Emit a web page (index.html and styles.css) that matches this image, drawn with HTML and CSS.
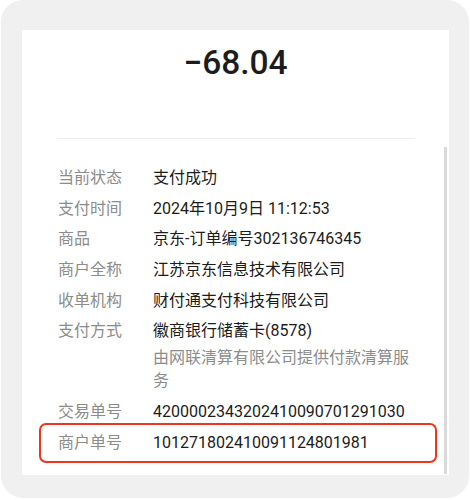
FILE: index.html
```html
<!DOCTYPE html>
<html lang="zh-CN">
<head>
<meta charset="utf-8">
<title>账单详情</title>
<link rel="stylesheet" href="styles.css">
</head>
<body>
<div class="frame">
  <div class="panel">
    <div class="amount">−68.04</div>
    <div class="divider"></div>
    <div class="details">
      <div class="row"><div class="label">当前状态</div><div class="value">支付成功</div></div>
      <div class="row"><div class="label">支付时间</div><div class="value">2024年10月9日 11:12:53</div></div>
      <div class="row"><div class="label">商品</div><div class="value">京东-订单编号302136746345</div></div>
      <div class="row"><div class="label">商户全称</div><div class="value">江苏京东信息技术有限公司</div></div>
      <div class="row"><div class="label">收单机构</div><div class="value">财付通支付科技有限公司</div></div>
      <div class="row"><div class="label">支付方式</div><div class="value">徽商银行储蓄卡(8578)<div class="sub">由网联清算有限公司提供付款清算服务</div></div></div>
      <div class="row"><div class="label">交易单号</div><div class="value">4200002343202410090701291030</div></div>
      <div class="row highlight"><div class="label">商户单号</div><div class="value">101271802410091124801981</div></div>
    </div>
    <div class="scrollbar"></div>
  </div>
</div>
</body>
</html>
```
FILE: styles.css
```css
html, body {
  margin: 0;
  padding: 0;
  background: #ffffff;
}
body {
  font-family: Roboto, "Noto Sans CJK SC", sans-serif;
  color: #1c1c1c;
}
.frame {
  box-sizing: border-box;
  width: 468px;
  height: 498px;
  margin-left: 1px;
  background: #f0f0f0;
  border-radius: 22px;
  padding: 30px 20px 23px 21px;
}
.panel {
  position: relative;
  background: #ffffff;
  height: 445px;
  overflow: hidden;
}
.amount {
  padding-top: 11px;
  line-height: 44px;
  font-size: 33.5px;
  font-weight: 500;
  text-align: center;
  color: #1c1c1c;
}
.divider {
  margin: 53px 34px 0 35px;
  border-top: 1px solid #eeeeee;
}
.details {
  padding: 27px 34px 0 36px;
  display: flex;
  flex-direction: column;
  row-gap: 7.7px;
  font-size: 16px;
  line-height: 23px;
}
.row {
  display: grid;
  grid-template-columns: 95px 1fr;
}
.label {
  color: #8c8c8c;
}
.value {
  color: #1c1c1c;
}
.sub {
  margin-top: 4px;
  line-height: 23px;
  color: #8c8c8c;
}
.highlight {
  position: relative;
}
.highlight::after {
  content: "";
  position: absolute;
  left: -19px;
  right: -22px;
  top: -8px;
  bottom: -9px;
  border: 2px solid #f0351c;
  border-radius: 7px;
}
.scrollbar {
  position: absolute;
  left: 422px;
  top: 117px;
  bottom: 1px;
  width: 3px;
  background: #dadada;
}
```
